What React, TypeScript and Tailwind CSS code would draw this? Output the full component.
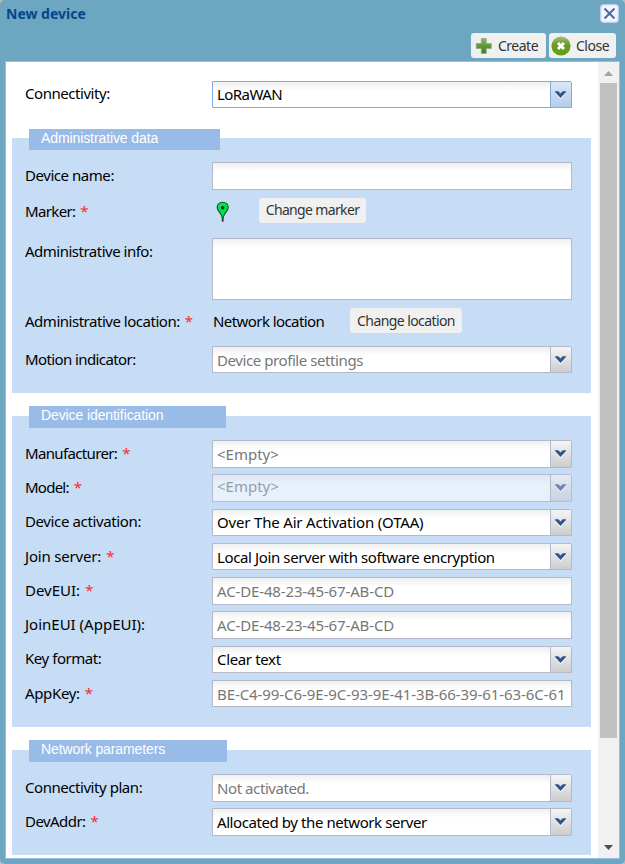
import React from "react";

function Chevron({ dim = false }: { dim?: boolean }) {
  return (
    <svg width="13" height="10" viewBox="0 0 13 10" className={dim ? "opacity-70" : ""}>
      <path d="M1 3h4l1.500 1.500L8 3h4L6.500 9.600z" fill="#fff" opacity=".8" />
      <path d="M1 1.200h3.300l2.200 2.300 2.200-2.300H12v.9L6.500 7.900 1 2.100z" fill="#34528f" />
    </svg>
  );
}

type FieldProps = {
  value?: string;
  select?: boolean;
  muted?: boolean;
  disabled?: boolean;
  focus?: boolean;
  h?: string;
  track?: string;
  pad?: string;
};

function Field({
  value = "",
  select,
  muted,
  disabled,
  focus,
  h = "h-7",
  track = "tracking-[-0.42px]",
  pad = "pb-px",
}: FieldProps) {
  const border = focus ? "border-[#7eadd9]" : "border-[#b5b8c8]";
  return (
    <div
      className={`flex w-[360px] shrink-0 border ${border} ${h} ${
        disabled ? "bg-[#ebf3fc] opacity-90" : "bg-white"
      } ${select ? "rounded-tr-[2px]" : ""}`}
    >
      <div
        className={`flex min-w-0 flex-1 items-center overflow-hidden bg-linear-to-b ${
          disabled ? "from-[#e0e8f2] to-[#ebf3fc]" : "from-[#eef0f0] to-white"
        } to-[9px] pl-1 whitespace-pre ${pad} ${track} ${
          disabled ? "text-[#8f979f]" : muted ? "text-[#777]" : "text-black"
        }`}
      >
        {value}
      </div>
      {select && (
        <div
          className={`flex w-[21px] justify-center border-l bg-linear-to-b pt-2 pr-px ${border} ${
            focus
              ? "from-[#dbe7f6] to-[#b3cdec]"
              : disabled
                ? "from-[#e6ecf3] to-[#c9d2dd]"
                : "from-[#f5f5f5] to-[#cdcdcd]"
          }`}
        >
          <Chevron dim={disabled} />
        </div>
      )}
    </div>
  );
}

type RowProps = {
  label: string;
  required?: boolean;
  mt: string;
  h?: string;
  track?: string;
  top?: string;
  children: React.ReactNode;
};

function Row({ label, required, mt, h = "h-7", track = "tracking-[-0.45px]", top = "pt-[3px]", children }: RowProps) {
  return (
    <div className={`flex ${mt} ${h}`}>
      <div className={`w-[187px] shrink-0 whitespace-pre ${top} ${track}`}>
        {label}
        {required && <span className="ml-[5px] text-[#ff2a2a]">*</span>}
      </div>
      {children}
    </div>
  );
}

function Section({
  title,
  w,
  h,
  mt,
  legend = "h-[22px] -mt-2.5",
  children,
}: {
  title: string;
  w: string;
  h: string;
  mt: string;
  legend?: string;
  children: React.ReactNode;
}) {
  return (
    <section className={`flex w-[579px] shrink-0 flex-col bg-[#c6ddf5] pl-[13px] ${h} ${mt}`}>
      <h2
        className={`ml-1 shrink-0 bg-[#99bbe8] pl-3 font-['Liberation_Sans',Arial,sans-serif] text-[14px] leading-[19px] tracking-[-0.1px] text-white ${w} ${legend}`}
      >
        {title}
      </h2>
      {children}
    </section>
  );
}

function Button({ children, className }: { children: React.ReactNode; className: string }) {
  return (
    <button
      className={`flex h-[25px] shrink-0 items-center rounded-[3px] bg-[#f0f0f0] text-[14px] whitespace-nowrap text-[#333] ${className}`}
    >
      {children}
    </button>
  );
}

export default function App() {
  return (
    <div className="h-[864px] w-[625px] overflow-hidden bg-[#b4bcc4] font-['Noto_Sans',sans-serif] text-[15px] leading-5 text-black">
      <div className="flex h-full flex-col rounded-[5px] bg-[#6ca6c1] pr-[5px] pl-[5px]">
        <header className="flex h-[33px] shrink-0 justify-between">
          <h1 className="pt-1 pl-px text-[14px] font-bold tracking-[0px] text-[#04468c]">New device</h1>
          <svg width="19" height="19" viewBox="0 0 19 19" className="mt-1 mr-px">
            <rect x=".5" y=".5" width="18" height="18" rx="3" fill="#dce8fb" stroke="#b8d0f2" />
            <rect x="2" y="2" width="15" height="15" rx="2" fill="#f3f7fe" />
            <path d="M4.500 4.500l10 10M14.500 4.500l-10 10" stroke="#4a68ac" strokeWidth="2" />
          </svg>
        </header>
        <div className="flex h-[28px] shrink-0 justify-end gap-[3px] pr-1">
          <Button className="w-[75px] gap-[5px] pl-1 tracking-[-0.5px]">
            <svg width="18" height="18" viewBox="0 0 18 18">
              <defs>
                <linearGradient id="plus" x1="0" y1="0" x2="0" y2="1">
                  <stop offset="0" stopColor="#8db66d" />
                  <stop offset=".5" stopColor="#5c9837" />
                  <stop offset="1" stopColor="#467b2b" />
                </linearGradient>
              </defs>
              <path
                d="M6.300 1.500h5v5h5v5h-5v5h-5v-5h-5v-5h5z"
                fill="url(#plus)"
                stroke="#8faa7d"
                strokeWidth=".8"
                strokeLinejoin="round"
              />
            </svg>
            Create
          </Button>
          <Button className="w-[67px] gap-[5px] pl-0.5 tracking-[-0.5px]">
            <svg width="20" height="20" viewBox="0 0 20 20">
              <defs>
                <linearGradient id="ball" x1="0" y1="0" x2="0" y2="1">
                  <stop offset="0" stopColor="#a3bd7a" />
                  <stop offset=".45" stopColor="#679a29" />
                  <stop offset="1" stopColor="#5da50e" />
                </linearGradient>
              </defs>
              <circle cx="10" cy="10" r="9.600" fill="url(#ball)" />
              <path d="M7 7l6 6M13 7l-6 6" stroke="#fff" strokeWidth="3" />
            </svg>
            Close
          </Button>
        </div>
        <main className="flex h-[798px] w-[615px] shrink-0 overflow-hidden border border-[#99bbe8] bg-white">
          <div className="flex w-[592px] flex-col pl-1.5">
            <div className="shrink-0 pl-[13px]">
              <Row label="Connectivity:" mt="mt-[19px]" h="h-[27px]" top="pt-0.5">
                <Field value="LoRaWAN" select focus h="h-[27px]" track="tracking-[-0.55px]" />
              </Row>
            </div>
            <Section title="Administrative data" w="w-[191px]" h="h-[255px]" mt="mt-[30px]" legend="h-[21px] -mt-[9px]">
              <Row label="Device name:" mt="mt-3">
                <Field />
              </Row>
              <Row label="Marker:" required mt="mt-2" h="h-[25px]" track="tracking-[-0.65px]">
                <svg width="14" height="22" viewBox="0 0 14 22" className="mt-[3px] ml-[4px]">
                  <path
                    d="M6.700 1.300C3.500 1.300 1.200 3.500 1.200 6.400c0 3.200 3.600 5.400 4.900 9.400l.3 4.500h.6l.3-4.500c1.300-4 4.900-6.200 4.900-9.400 0-2.900-2.300-5.100-5.500-5.100z"
                    fill="#00e64d"
                    stroke="#174d27"
                    strokeWidth="1.100"
                  />
                  <circle cx="6.700" cy="6.700" r="1.800" fill="#062b10" />
                </svg>
                <Button className="ml-[29px] w-[107px] justify-center pb-px tracking-[-0.65px]">Change marker</Button>
              </Row>
              <Row label="Administrative info:" mt="mt-[15px]" h="h-[62px]" track="tracking-[-0.5px]">
                <Field h="h-[62px]" />
              </Row>
              <Row label="Administrative location:" required mt="mt-2" h="h-[25px]" track="tracking-[-0.48px]">
                <div className="w-[138px] pt-[3px] pl-px tracking-[-0.57px]">Network location</div>
                <Button className="w-[112px] justify-center tracking-[-0.58px]">Change location</Button>
              </Row>
              <Row label="Motion indicator:" mt="mt-[13px]" h="h-[27px]" track="tracking-[-0.6px]">
                <Field value="Device profile settings" select muted h="h-[27px]" pad="pt-px" />
              </Row>
            </Section>

            <Section title="Device identification" w="w-[197px]" h="h-[311px]" mt="mt-[23px]">
              <Row label="Manufacturer:" required mt="mt-3" track="tracking-[-0.65px]">
                <Field value="<Empty>" select muted track="tracking-[0px]" />
              </Row>
              <Row label="Model:" required mt="mt-1.5" track="tracking-[-0.75px]">
                <Field value="<Empty>" select disabled pad="pb-1" track="tracking-[0px]" />
              </Row>
              <Row label="Device activation:" mt="mt-[7px]" h="h-[27px]" track="tracking-[-0.37px]" top="pt-0.5">
                <Field value="Over The Air Activation (OTAA)" select h="h-[27px]" track="tracking-[-0.18px]" />
              </Row>
              <Row label="Join server:" required mt="mt-[7px]" h="h-[27px]" track="tracking-[-0.18px]">
                <Field
                  value="Local Join server with software encryption"
                  select
                  h="h-[27px]"
                  track="tracking-[-0.38px]"
                  pad="pt-px"
                />
              </Row>
              <Row label="DevEUI:" required mt="mt-[7px]" track="tracking-[0px]">
                <Field value="AC-DE-48-23-45-67-AB-CD" muted track="tracking-[-0.14px]" />
              </Row>
              <Row label="JoinEUI (AppEUI):" mt="mt-1.5" track="tracking-[0px]">
                <Field value="AC-DE-48-23-45-67-AB-CD" muted track="tracking-[-0.14px]" />
              </Row>
              <Row label="Key format:" mt="mt-[7px]" h="h-[27px]" top="pt-0.5">
                <Field value="Clear text" select h="h-[27px]" track="tracking-[-0.35px]" />
              </Row>
              <Row label="AppKey:" required mt="mt-[7px]" h="h-[27px]" track="tracking-[-0.35px]">
                <Field
                  value="BE-C4-99-C6-9E-9C-93-9E-41-3B-66-39-61-63-6C-61"
                  muted
                  h="h-[27px]"
                  track="tracking-[-0.08px]"
                  pad="pt-px"
                />
              </Row>
            </Section>

            <Section title="Network parameters" w="w-[198px]" h="h-[105px]" mt="mt-[23px]">
              <Row label="Connectivity plan:" mt="mt-3">
                <Field value="Not activated." select muted />
              </Row>
              <Row label="DevAddr:" required mt="mt-1.5" track="tracking-[-0.55px]">
                <Field value="Allocated by the network server" select />
              </Row>
            </Section>
          </div>
          <div className="flex w-[21px] flex-col items-center bg-[#f1f1f1]">
            <svg width="9" height="5" viewBox="0 0 9 5" className="mt-[9px] shrink-0">
              <path d="M0 5L4.500 0 9 5z" fill="#a3a3a3" />
            </svg>
            <div className="mt-[7px] h-[655px] w-[17px] shrink-0 bg-[#c1c1c1]" />
            <svg width="9" height="5" viewBox="0 0 9 5" className="mt-[107px] shrink-0">
              <path d="M0 0L4.500 5 9 0z" fill="#505050" />
            </svg>
          </div>
        </main>
      </div>
    </div>
  );
}
